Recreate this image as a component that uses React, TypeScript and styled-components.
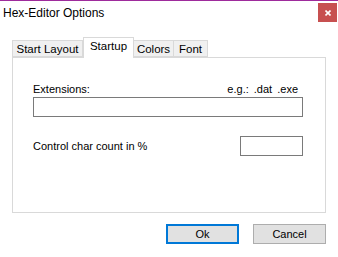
import styled, { createGlobalStyle } from 'styled-components';

const GlobalStyle = createGlobalStyle`
  html, body {
    margin: 0;
    padding: 0;
    background: #ffffff;
  }
  * {
    box-sizing: border-box;
  }
`;

const Window = styled.div`
  width: 338px;
  height: 257px;
  background: #ffffff;
  border-top: 1px solid #9e2b9c;
  display: flex;
  flex-direction: column;
  font-family: 'Liberation Sans', Arial, sans-serif;
  color: #000000;
  overflow: hidden;
`;

const TitleBar = styled.div`
  height: 30px;
  display: flex;
  align-items: flex-start;
  justify-content: space-between;
`;

const Title = styled.div`
  margin: 5px 0 0 3px;
  font-size: 12px;
  line-height: 14px;
`;

const CloseButton = styled.div`
  width: 19px;
  height: 19px;
  margin: 2px 1px 0 0;
  background: #c75050;
  display: flex;
  align-items: center;
  justify-content: center;
`;

const TabStrip = styled.div`
  margin: 6px 0 0 12px;
  height: 20px;
  display: flex;
  align-items: flex-end;
  position: relative;
  z-index: 1;
`;

const Tab = styled.div<{ $active?: boolean; $width: number }>`
  width: ${({ $width }) => $width}px;
  height: ${({ $active }) => ($active ? '21px' : '17px')};
  margin-bottom: ${({ $active }) => ($active ? '-1px' : '0')};
  padding-bottom: ${({ $active }) => ($active ? '4px' : '0')};
  border: 1px solid #d9d9d9;
  border-bottom: ${({ $active }) => ($active ? 'none' : '1px solid #d9d9d9')};
  border-left: ${({ $active }) => ($active ? '1px solid #d9d9d9' : 'none')};
  background: ${({ $active }) => ($active ? '#ffffff' : '#f0f0f0')};
  font-size: 11.5px;
  display: flex;
  align-items: center;
  justify-content: center;
  &:first-child {
    border-left: 1px solid #d9d9d9;
  }
`;

const Panel = styled.div`
  margin-left: 12px;
  width: 314px;
  height: 156px;
  border: 1px solid #d9d9d9;
  background: #ffffff;
  padding: 25px 0 0 20px;
  display: flex;
  flex-direction: column;
  font-size: 11px;
`;

const FieldColumn = styled.div`
  width: 270px;
  display: flex;
  flex-direction: column;
`;

const LabelRow = styled.div`
  display: flex;
  justify-content: space-between;
  padding-right: 5px;
  line-height: 13px;
  margin-bottom: 1px;
`;

const Hint = styled.span`
  word-spacing: 2px;
`;

const TextBox = styled.div<{ $width: number }>`
  width: ${({ $width }) => $width}px;
  height: 20px;
  border: 1px solid #7a7a7a;
  background: #ffffff;
`;

const ControlRow = styled.div`
  margin-top: 19px;
  display: flex;
  align-items: center;
  justify-content: space-between;
  line-height: 13px;
`;

const ButtonRow = styled.div`
  margin: 11px 12px 0 0;
  display: flex;
  justify-content: flex-end;
  gap: 14px;
`;

const Button = styled.div<{ $default?: boolean }>`
  width: 73px;
  height: 20px;
  background: #e1e1e1;
  border: ${({ $default }) => ($default ? '2px solid #0078d7' : '1px solid #adadad')};
  font-size: 11px;
  display: flex;
  align-items: center;
  justify-content: center;
`;

const tabs = [
  { label: 'Start Layout', width: 71 },
  { label: 'Startup', width: 51 },
  { label: 'Colors', width: 40 },
  { label: 'Font', width: 34 },
];

export default function App() {
  return (
    <>
      <GlobalStyle />
      <Window>
        <TitleBar>
          <Title>Hex-Editor Options</Title>
          <CloseButton>
            <svg width="6" height="6" viewBox="0 0 6 6">
              <path d="M0.5 0.5 L5.5 5.5 M5.5 0.5 L0.5 5.5" stroke="#ffffff" strokeWidth="1.6" />
            </svg>
          </CloseButton>
        </TitleBar>
        <TabStrip>
          {tabs.map((t) => (
            <Tab key={t.label} $active={t.label === 'Startup'} $width={t.width}>
              {t.label}
            </Tab>
          ))}
        </TabStrip>
        <Panel>
          <FieldColumn>
            <LabelRow>
              <span>Extensions:</span>
              <Hint>e.g.: .dat .exe</Hint>
            </LabelRow>
            <TextBox $width={270} />
            <ControlRow>
              <span>Control char count in %</span>
              <TextBox $width={63} />
            </ControlRow>
          </FieldColumn>
        </Panel>
        <ButtonRow>
          <Button $default>Ok</Button>
          <Button>Cancel</Button>
        </ButtonRow>
      </Window>
    </>
  );
}
